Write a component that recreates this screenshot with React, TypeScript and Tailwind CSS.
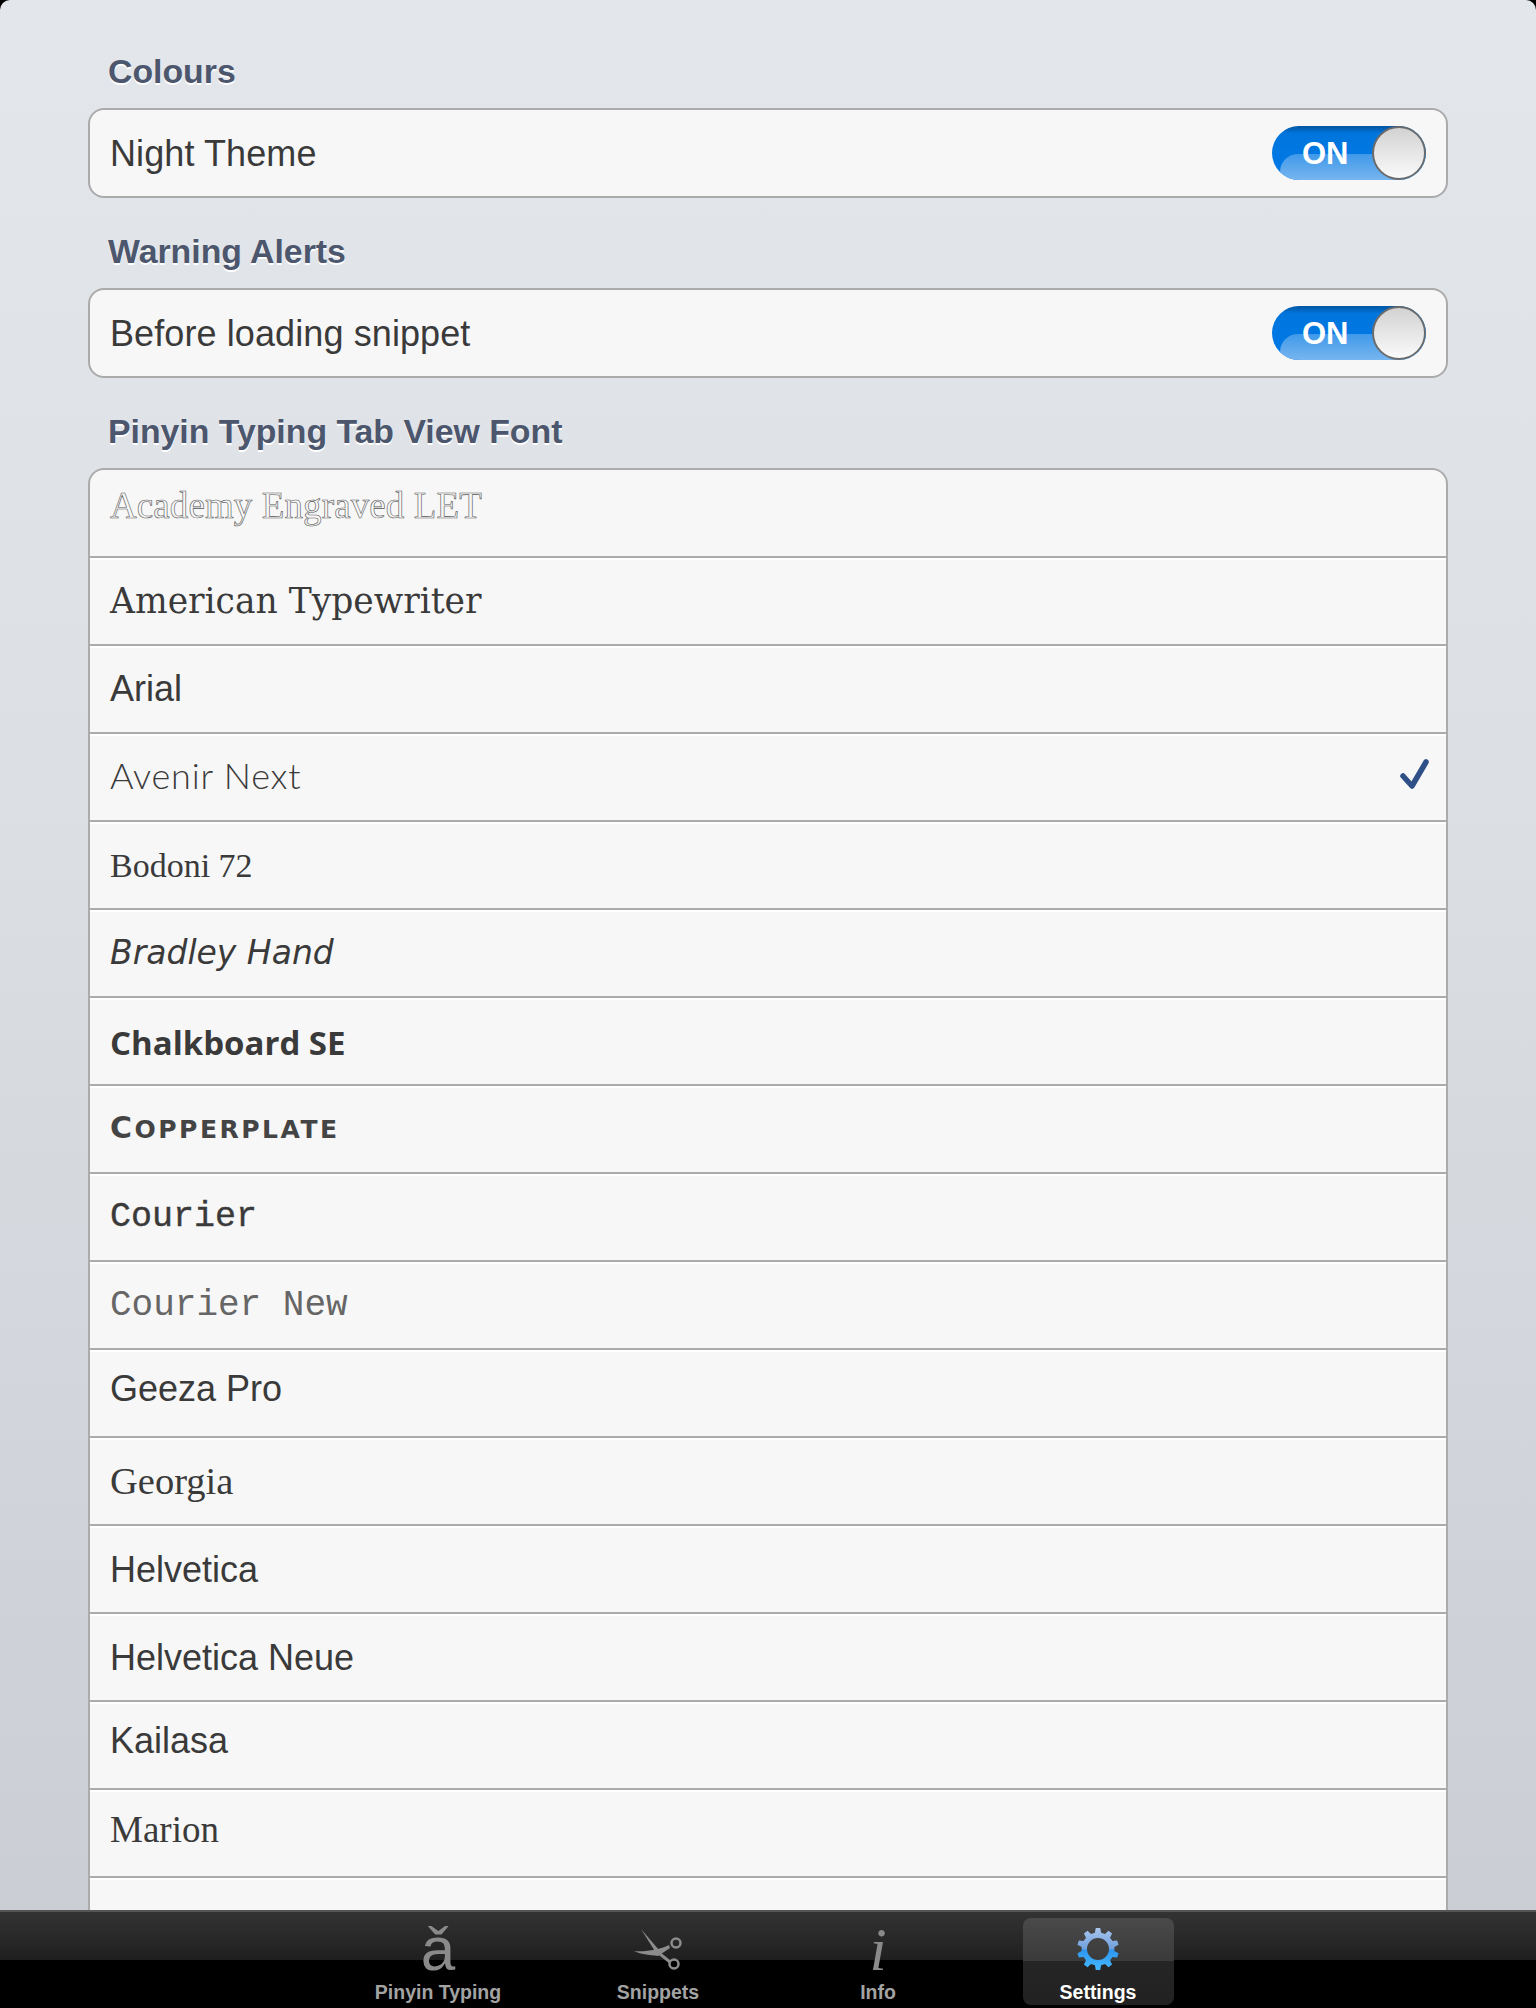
import React from 'react'

const sans = "font-['Liberation_Sans',Arial,sans-serif]"

const fonts = [
  {
    name: 'Academy Engraved LET',
    cls: "font-['Liberation_Serif',serif] text-[37px] tracking-[0.1px] pb-3.5 text-[#f7f7f7] [-webkit-text-stroke:0.6px_#555]",
  },
  { name: 'American Typewriter', cls: "font-['DejaVu_Serif',serif] text-[34.5px]" },
  { name: 'Arial', cls: `${sans} text-[36px]` },
  { name: 'Avenir Next', cls: "font-['Lato',sans-serif] font-light text-[36px] tracking-[0.8px] pb-1", checked: true },
  { name: 'Bodoni 72', cls: "font-['Liberation_Serif',serif] text-[34px] pt-0.5" },
  { name: 'Bradley Hand', cls: "font-['DejaVu_Sans',sans-serif] italic text-[33px]" },
  { name: 'Chalkboard SE', cls: "font-['Open_Sans',sans-serif] font-bold text-[33px] pt-1" },
  {
    name: 'Copperplate',
    cls: "font-['DejaVu_Sans',sans-serif] font-bold uppercase inline-block text-[25px] tracking-[2.5px] !text-[#444] first-letter:text-[30px]",
  },
  { name: 'Courier', cls: "font-['Liberation_Mono',monospace] text-[35px] [-webkit-text-stroke:0.4px_#3a3a3a]" },
  { name: 'Courier New', cls: "font-['Liberation_Mono',monospace] text-[36px] pt-0.5 !text-[#666]" },
  { name: 'Geeza Pro', cls: `${sans} text-[36px] pb-2` },
  { name: 'Georgia', cls: "font-['Liberation_Serif',serif] text-[38.5px]" },
  { name: 'Helvetica', cls: `${sans} text-[36px] pt-0.5` },
  { name: 'Helvetica Neue', cls: `${sans} text-[36px] pt-0.5` },
  { name: 'Kailasa', cls: `${sans} text-[36px] pb-2` },
  { name: 'Marion', cls: "font-['Liberation_Serif',serif] text-[37px] pb-1.5" },
  { name: 'Noteworthy', cls: "font-['DejaVu_Sans',sans-serif] text-[34px] pt-2" },
]

const gearPath = () => {
  const teeth = 10
  const pts: string[] = []
  for (let i = 0; i < teeth; i++) {
    const a = (i / teeth) * Math.PI * 2 - Math.PI / 2
    const step = (Math.PI * 2) / teeth
    const spots: [number, number][] = [
      [16.5, a - step * 0.3],
      [21, a - step * 0.17],
      [21, a + step * 0.17],
      [16.5, a + step * 0.3],
    ]
    spots.forEach(([r, t]) => pts.push(`${(22 + r * Math.cos(t)).toFixed(2)} ${(22 + r * Math.sin(t)).toFixed(2)}`))
  }
  return `M${pts.join('L')}Z M22 11A11 11 0 1 0 22 33A11 11 0 1 0 22 11Z`
}

const Toggle = () => (
  <div className="relative h-[54px] w-[154px] overflow-hidden rounded-full bg-[linear-gradient(#00559f_0%,#0075dd_14%,#007ae8_100%)]">
    {/* glossy lower half of the switch */}
    <div className="absolute bottom-0 left-[8px] right-0 h-[26px] rounded-tl-[18px] bg-[linear-gradient(#3f99ea,#77b5ef)]" />
    <span className={`${sans} absolute left-[30px] top-[10px] text-[31px] font-bold leading-9 text-white`}>ON</span>
    <div className="absolute right-0 top-0 h-[54px] w-[54px] rounded-full border-2 border-[#6b6b6b] bg-[linear-gradient(#d2d2d2,#fafafa)]" />
  </div>
)

const SectionTitle = ({ children }: { children: React.ReactNode }) => (
  <h2 className={`${sans} ml-[108px] text-[33.8px] font-bold leading-10 text-[#4c566d] [text-shadow:0_2px_0_#fff]`}>
    {children}
  </h2>
)

const SwitchCard = ({ label }: { label: string }) => (
  <div className="mx-[88px] mt-[17px] flex h-[90px] items-center justify-between rounded-[16px] border-2 border-[#ababab] bg-[#f7f7f7] pl-5 pr-[20px]">
    <span className={`${sans} pt-0.5 text-[36px] tracking-[0.1px] text-[#3a3a3a]`}>{label}</span>
    <Toggle />
  </div>
)

const Tab = ({ label, children, active }: { label: string; children: React.ReactNode; active?: boolean }) => (
  <div className="flex w-[220px] justify-center">
    <div
      className={`mt-[6px] flex h-[87px] w-[151px] flex-col items-center rounded-[8px] ${
        active ? 'bg-[linear-gradient(#4a4a4a_0%,#3a3a3a_50%,#252525_50%,#222222_100%)]' : ''
      }`}
    >
      <div className="flex h-[62px] w-full items-center justify-center">{children}</div>
      <span className={`${sans} whitespace-nowrap text-[19.5px] font-bold leading-6 ${active ? 'text-white' : 'text-[#a3a3a3]'}`}>
        {label}
      </span>
    </div>
  </div>
)

export default function App() {
  return (
    <div className="h-[2008px] w-full overflow-hidden bg-black">
      <div className="flex h-full flex-col overflow-hidden rounded-t-[10px] bg-[linear-gradient(#e3e6eb_0%,#dde0e5_35%,#d5d8dd_60%,#c9ccd3_100%)]">
        <div className="min-h-0 flex-1 overflow-hidden pt-[51px]">
          <SectionTitle>Colours</SectionTitle>
          <SwitchCard label="Night Theme" />
          <div className="h-[33px]" />
          <SectionTitle>Warning Alerts</SectionTitle>
          <SwitchCard label="Before loading snippet" />
          <div className="h-[33px]" />
          <SectionTitle>Pinyin Typing Tab View Font</SectionTitle>
          <div className="mx-[88px] mt-[17px] rounded-t-[16px] border-2 border-b-0 border-[#ababab] bg-[#f7f7f7]">
            {fonts.map((f) => (
              <div
                key={f.name}
                className="flex h-[88px] items-center justify-between border-b-2 border-[#ababab] pl-5 pr-[16px] shadow-[inset_0_2px_0_#ffffff] first:shadow-none"
              >
                <span className={`leading-10 text-[#3a3a3a] ${f.cls}`}>{f.name}</span>
                {f.checked && (
                  <svg className="mb-1.5" width="30" height="30" viewBox="0 0 30 30" fill="none">
                    <path d="M3 17L12 27L26 3" stroke="#2f4f87" strokeWidth="5.5" strokeLinecap="round" strokeLinejoin="round" />
                  </svg>
                )}
              </div>
            ))}
          </div>
        </div>

        <div className="h-[98px] shrink-0 border-t-2 border-[#555] bg-[linear-gradient(#333333_0%,#1f1f1f_50%,#000000_50%,#000000_100%)]">
          <div className="flex justify-center">
            <Tab label="Pinyin Typing">
              <span className={`${sans} text-[62px] leading-none text-[#8a8a8a]`}>ǎ</span>
            </Tab>
            <Tab label="Snippets">
              <svg width="50" height="42" viewBox="0 0 50 42" fill="none">
                <path d="M8 1L26 22L23 25Z" fill="#8c8c8c" />
                <path d="M1 23C12 24 26 22 36 17L37 20L25 28C16 27 7 26 1 23Z" fill="#8c8c8c" />
                <path d="M22 22L37 34" stroke="#8c8c8c" strokeWidth="3" />
                <circle cx="43" cy="15" r="4.5" stroke="#8c8c8c" strokeWidth="2.5" />
                <circle cx="41" cy="36" r="4.5" stroke="#8c8c8c" strokeWidth="2.5" />
              </svg>
            </Tab>
            <Tab label="Info">
              <span className="font-['Liberation_Serif',serif] text-[62px] italic leading-none text-[#8a8a8a]">i</span>
            </Tab>
            <Tab label="Settings" active>
              <svg width="44" height="44" viewBox="0 0 44 44">
                <defs>
                  <linearGradient id="gearFill" x1="0" y1="0" x2="0" y2="1">
                    <stop offset="0" stopColor="#a8c6ee" />
                    <stop offset="0.5" stopColor="#6f9fdc" />
                    <stop offset="0.52" stopColor="#2d96f0" />
                    <stop offset="1" stopColor="#46b8fd" />
                  </linearGradient>
                </defs>
                <path d={gearPath()} fill="url(#gearFill)" fillRule="evenodd" />
              </svg>
            </Tab>
          </div>
        </div>
      </div>
    </div>
  )
}
